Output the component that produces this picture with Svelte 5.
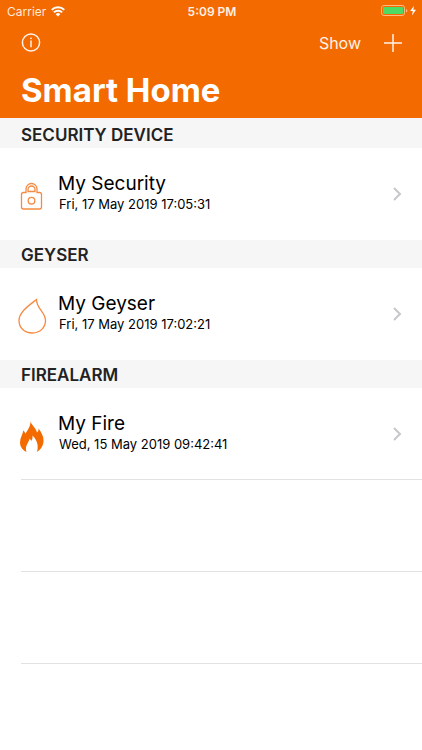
<script lang="ts">
	type Device = { name: string; updated: string; icon: 'lock' | 'drop' | 'fire' };
	type Section = { title: string; devices: Device[] };

	const sections: Section[] = [
		{
			title: 'Security Device',
			devices: [{ name: 'My Security', updated: 'Fri, 17 May 2019 17:05:31', icon: 'lock' }]
		},
		{
			title: 'Geyser',
			devices: [{ name: 'My Geyser', updated: 'Fri, 17 May 2019 17:02:21', icon: 'drop' }]
		},
		{
			title: 'Firealarm',
			devices: [{ name: 'My Fire', updated: 'Wed, 15 May 2019 09:42:41', icon: 'fire' }]
		}
	];
</script>

<div class="app">
	<header>
		<div class="status">
			<div class="carrier">
				<span>Carrier</span>
				<svg width="14" height="11" viewBox="0 0 14 11" aria-hidden="true">
					<path d="M0.7 3.9A9 9 0 0 1 13.3 3.9" />
					<path d="M2.9 6.4A5.8 5.8 0 0 1 11.1 6.4" />
					<path class="solid" d="M7 10.6L4.7 8.3A3.2 3.2 0 0 1 9.3 8.3Z" />
				</svg>
			</div>
			<span class="time">5:09 PM</span>
			<div class="battery">
				<svg width="36" height="12" viewBox="0 0 36 12" aria-hidden="true">
					<rect class="shell" x="0.5" y="0.5" width="23" height="10" rx="2.5" />
					<rect class="charge" x="2" y="2" width="20" height="7" rx="1" />
					<path class="cap" d="M25 4V7.4Q26.4 6.9 26.4 5.7T25 4Z" />
					<path class="solid" d="M33 0.8L29.2 6.1H31.8L31 10.4L35 4.8H32.3Z" />
				</svg>
			</div>
		</div>
		<nav>
			<button class="info" aria-label="Info">
				<svg width="20" height="20" viewBox="0 0 20 20">
					<circle cx="10" cy="9.5" r="8.6" />
					<path d="M10 7.6V14.2" />
					<circle class="solid" cx="10" cy="5.3" r="0.9" />
				</svg>
			</button>
			<button class="show">Show</button>
			<button class="add" aria-label="Add device">
				<svg width="18" height="18" viewBox="0 0 18 18">
					<path d="M9 0V18M0 9H18" />
				</svg>
			</button>
		</nav>
		<h1>Smart Home</h1>
	</header>

	<main>
		{#each sections as section (section.title)}
			<section>
				<h2>{section.title}</h2>
				{#each section.devices as device (device.name)}
					<a class="row" href="#{device.icon}">
						<svg class="icon" width="32" height="36" viewBox="0 0 32 36" aria-hidden="true">
							{#if device.icon === 'lock'}
								<path d="M11 14.5H8.5Q6.5 14.5 6.5 16.5V29Q6.5 31 8.5 31H24.5Q26.5 31 26.5 29V16.5Q26.5 14.5 24.5 14.5H22V11A5.5 5.5 0 0 0 11 11Z" />
								<path d="M13 13.5V11.5A3.5 3.5 0 0 1 20 11.5V13.5Z" />
								<circle cx="16.5" cy="22.7" r="3.3" />
							{:else if device.icon === 'drop'}
								<path d="M21.5 1.5C14.5 7 4 14 4 22.5C4 30 9.5 35 17.3 35C25 35 30.5 29.5 30.5 22.5C30.5 14 21.5 11 21.5 1.5Z" />
							{:else}
								<path class="flame" d="M15.5 3C16 7 21 9.5 22 14.5C23.3 13.5 23.7 12 23.5 10.5C26.5 14.5 29 19 28.5 24C28 28.5 25.5 31.5 22 34C23.5 29 23 23 17.5 17.5C17.8 20 17.3 21.5 16.3 23C15.8 22 15.5 21.3 14.7 20.7C13.5 25 9.5 28 11.5 34C7.5 32 5 28.5 5 24.5C5 20 7.5 17 8.3 12.5C9.5 13.5 10 14.5 10.3 15.7C13 12 15.7 8 15.5 3Z" />
							{/if}
						</svg>
						<span class="text">
							<span class="name">{device.name}</span>
							<span class="date">{device.updated}</span>
						</span>
						<svg class="chevron" width="9" height="14" viewBox="0 0 9 14" aria-hidden="true">
							<path d="M1 1L7 7L1 13" />
						</svg>
					</a>
				{/each}
			</section>
		{/each}
		<div class="blank"></div>
		<div class="blank"></div>
	</main>
</div>

<style>
	:global(body) {
		background: #fff;
	}

	.app {
		font-family: Inter, 'Liberation Sans', sans-serif;
		color: #000;
	}

	header {
		background: #f36a00;
		color: #fff;
		padding-bottom: 8px;
	}

	.status {
		display: grid;
		grid-template-columns: 1fr auto 1fr;
		align-items: center;
		height: 22px;
		padding: 0 5px 0 7px;
		font-size: 12px;
	}

	.carrier {
		display: flex;
		align-items: center;
		gap: 5px;
		color: #ffe9d9;
	}

	.carrier path {
		fill: none;
		stroke: #fff;
		stroke-width: 2;
	}

	.status .solid {
		fill: #fff;
		stroke: none;
	}

	.time {
		font-weight: 600;
		color: #fff0e5;
	}

	.battery {
		display: flex;
		justify-content: flex-end;
	}

	.shell {
		fill: none;
		stroke: #ffb87f;
	}

	.charge {
		fill: #4cd964;
	}

	.cap {
		fill: #ffb87f;
	}

	nav {
		display: flex;
		align-items: center;
		height: 42px;
		padding: 0 20px 0 21px;
	}

	button {
		display: flex;
		padding: 0;
		border: none;
		background: none;
		color: #fff3ea;
		font: inherit;
		cursor: pointer;
	}

	button svg {
		fill: none;
		stroke: currentColor;
		stroke-width: 1.5;
	}

	.info .solid {
		fill: currentColor;
		stroke: none;
	}

	.show {
		margin-left: auto;
		font-size: 16px;
	}

	.add {
		margin-left: 23px;
	}

	h1 {
		margin: 0;
		padding: 6px 21px 0;
		font-size: 33px;
		line-height: 40px;
		font-weight: 700;
	}

	main {
		padding-top: 2px;
		background: #f6f6f6;
	}

	h2 {
		margin: 0;
		padding: 2px 21px 0;
		font-size: 17px;
		line-height: 26px;
		font-weight: 600;
		text-transform: uppercase;
		color: #222;
	}

	.row {
		display: flex;
		align-items: flex-start;
		box-sizing: border-box;
		height: 92px;
		padding: 0 20px 0 15px;
		background: #fff;
		color: inherit;
		text-decoration: none;
	}

	.icon {
		margin-top: 30px;
		fill: none;
		stroke: #f58a42;
		stroke-width: 1.3;
	}

	.flame {
		fill: #f36a00;
		stroke: none;
	}

	.text {
		display: flex;
		flex: 1;
		flex-direction: column;
		padding: 24px 0 0 11px;
	}

	.name {
		font-size: 19px;
		line-height: 24px;
	}

	.date {
		padding-left: 1px;
		font-size: 13px;
		line-height: 17px;
	}

	.chevron {
		align-self: center;
		fill: none;
		stroke: #c7c7cc;
		stroke-width: 2;
	}

	.blank {
		height: 92px;
	}

	section:last-of-type .row,
	.blank {
		box-sizing: border-box;
		background: linear-gradient(#e2e2e4, #e2e2e4) 21px 100% / 100% 1px no-repeat #fff;
	}
</style>
